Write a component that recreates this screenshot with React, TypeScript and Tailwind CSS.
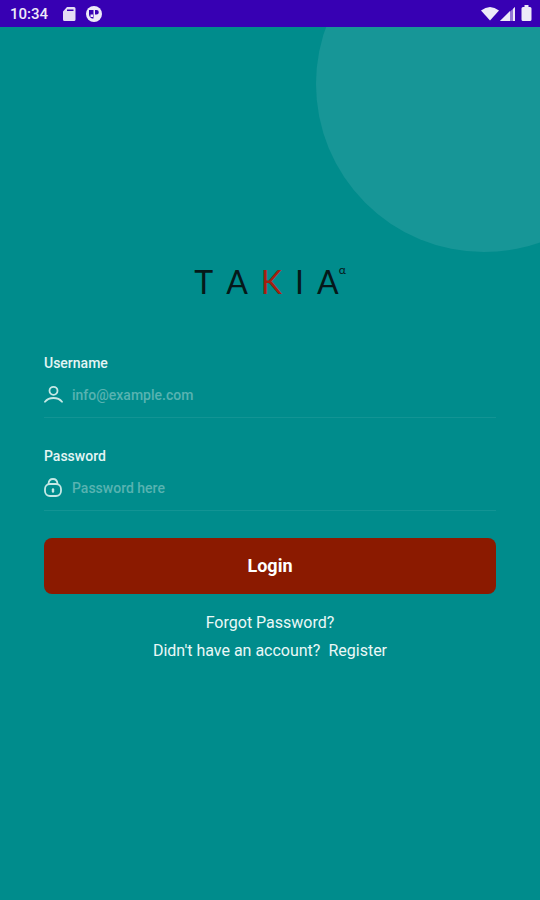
import type { ReactNode } from "react";

function StatusBar() {
  return (
    <header className="relative z-10 flex h-[27px] items-center justify-between bg-[#3700b3] pr-2 pl-[10px] text-[#eeeaf8]">
      <div className="flex items-center">
        <span className="text-[15px] leading-5 font-medium">10:34</span>
        <svg className="ml-[13px] h-4 w-4" viewBox="0 0 16 16" fill="currentColor" aria-hidden="true">
          <path
            fillRule="evenodd"
            d="M6 1h7a1.500 1.500 0 0 1 1.500 1.500v11A1.500 1.500 0 0 1 13 15H3.500A1.500 1.500 0 0 1 2 13.500V5.500ZM6 3.500v1.500h6.500V3.500Z"
            fillOpacity=".95"
          />
        </svg>
        <svg className="ml-2 h-[18px] w-[18px]" viewBox="0 0 18 18" aria-hidden="true">
          <circle cx="9" cy="9" r="8" fill="currentColor" />
          <path d="M4 5h4.500v8.500H7Q4 12 4 9ZM10 5h1.500a2.300 2.300 0 0 1 0 4.600H10Z" fill="#3700b3" />
          <path d="M5.500 9.500H8V12H5.500Z" fill="currentColor" />
        </svg>
      </div>
      <svg className="h-[18px] w-[51px]" viewBox="0 0 51 18" fill="currentColor" aria-hidden="true">
        <path d="M0 5.500Q9 -1.500 18 5.500L9 15.500Z" />
        <path d="M34 2v14H19Z" fillOpacity=".5" />
        <path d="M29 6v10H19Z" />
        <path d="M34 2v14h-2V4Z" />
        <path d="M42 2H43.500V0h4v2h1.500Q50.500 2 50.500 3.500v11Q50.500 16 49 16h-7Q40.500 16 40.500 14.500v-11Q40.500 2 42 2Z" />
      </svg>
    </header>
  );
}

function Logo() {
  return (
    <h1
      aria-label="TAKIA"
      className="flex items-start justify-center gap-[13px] font-['Lato',sans-serif] text-[32px] leading-10 font-normal text-[#06191a]"
    >
      <span>T</span>
      <span>A</span>
      <span className="text-[#a3200f]">K</span>
      <span>I</span>
      <span className="flex">
        A
        <span className="text-xs leading-4">α</span>
      </span>
    </h1>
  );
}

type FieldProps = {
  id: string;
  label: string;
  type: string;
  placeholder: string;
  icon: ReactNode;
};

function Field({ id, label, type, placeholder, icon }: FieldProps) {
  return (
    <div>
      <label htmlFor={id} className="block text-sm leading-5 font-medium text-[#e4f5f4]">
        {label}
      </label>
      <div className="flex h-[45px] items-center gap-2 border-b border-[#129494] pb-px text-[#c5e8e5]">
        {icon}
        <input
          id={id}
          type={type}
          placeholder={placeholder}
          className="min-w-0 flex-1 bg-transparent text-sm leading-5 font-medium text-white outline-none placeholder:text-[#58b3b1]"
        />
      </div>
    </div>
  );
}

const userIcon = (
  <svg className="h-5 w-5 shrink-0" viewBox="0 0 20 20" fill="none" stroke="currentColor" strokeWidth="1.800" strokeLinecap="round" aria-hidden="true">
    <circle cx="9.500" cy="5.800" r="4" />
    <path d="M1 16.800Q4 13 9.500 13T18 16.800" />
  </svg>
);

const lockIcon = (
  <svg className="h-5 w-5 shrink-0" viewBox="0 0 20 20" fill="none" stroke="currentColor" strokeWidth="1.800" strokeLinecap="round" aria-hidden="true">
    <rect x="1" y="6" width="16" height="12" rx="5" />
    <path d="M4.500 6Q4.800 1 9 1T13.500 6" />
    <path d="M9 11.500v2" strokeWidth="2.400" />
  </svg>
);

export default function App() {
  return (
    <div className="relative flex min-h-screen flex-col overflow-hidden bg-[#008c8c] font-['Roboto',sans-serif]">
      <div className="absolute -top-[84px] -right-28 h-[336px] w-[336px] rounded-full bg-[#179697]" />
      <StatusBar />
      <main className="relative flex flex-1 flex-col px-11 pt-[235px]">
        <Logo />
        <form className="mt-[51px] flex flex-col" onSubmit={(event) => event.preventDefault()}>
          <div className="flex flex-col gap-7">
            <Field id="username" label="Username" type="text" placeholder="info@example.com" icon={userIcon} />
            <Field id="password" label="Password" type="password" placeholder="Password here" icon={lockIcon} />
          </div>
          <button type="submit" className="mt-[27px] h-14 rounded-lg bg-[#8b1a00] text-lg leading-6 font-bold text-white">
            Login
          </button>
        </form>
        <nav className="mt-[15px] flex flex-col items-center text-base leading-7 text-[#eaf8f7]">
          <a href="#forgot">Forgot Password?</a>
          <p className="flex gap-2">
            Didn't have an account?
            <a href="#register">Register</a>
          </p>
        </nav>
      </main>
    </div>
  );
}
